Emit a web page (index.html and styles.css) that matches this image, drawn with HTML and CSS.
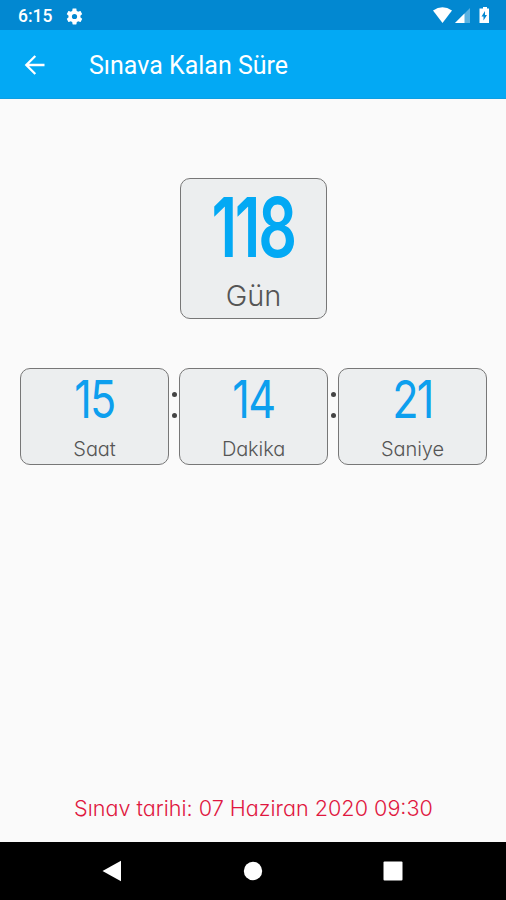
FILE: index.html
```html
<!DOCTYPE html>
<html lang="tr">

<head>
    <meta charset="UTF-8">
    <meta name="viewport" content="width=device-width, initial-scale=1.0">
    <title>Sınava Kalan Süre</title>
    <link rel="stylesheet" href="styles.css">
</head>

<body>
    <div class="status-bar">
        <span class="clock">6:15</span>
        <svg class="gear" width="19" height="19" viewBox="0 0 24 24">
            <path fill="#fff" d="M19.4 13c0-.3.1-.6.1-1s0-.7-.1-1l2.1-1.700c.2-.1.2-.4.1-.6l-2-3.500c-.1-.2-.4-.3-.6-.2l-2.500 1c-.5-.4-1.100-.7-1.700-1l-.4-2.600c0-.3-.2-.4-.4-.4h-4c-.2 0-.5.2-.5.4l-.4 2.600c-.6.3-1.200.6-1.700 1l-2.500-1c-.2-.1-.5 0-.6.2l-2 3.500c-.1.2-.1.500.1.600l2.100 1.700c0 .3-.1.6-.1 1s0 .7.1 1l-2.100 1.700c-.2.1-.2.4-.1.6l2 3.500c.1.2.4.300.6.200l2.500-1c.5.4 1.100.7 1.700 1l.4 2.600c0 .2.2.4.5.4h4c.2 0 .5-.2.5-.4l.4-2.600c.6-.3 1.200-.6 1.700-1l2.500 1c.2.1.5 0 .6-.2l2-3.500c.1-.2.1-.5-.1-.6zM12 15.300a3.300 3.300 0 1 1 0-6.600 3.300 3.300 0 0 1 0 6.600z"/>
        </svg>
        <svg class="signals" width="60" height="20" viewBox="0 0 60 20">
            <path fill="#fff" d="M1 4.500Q10.500-2 20 4.500L10.500 17z"/>
            <path fill="#fff" fill-opacity=".35" d="M38 2v15H23z"/>
            <path fill="#fff" d="M32.500 7.500V17H23z"/>
            <path fill="#fff" d="M49.500 2.500h1.500V1h4v1.500h2V17H47.500V2.500z"/>
            <path fill="#0288d1" d="M53 5l-3.500 5.500h2v4l3.500-5.500h-2z"/>
        </svg>
    </div>

    <div class="toolbar">
        <svg class="back" width="22" height="22" viewBox="0 0 22 22">
            <path fill="none" stroke="#fff" stroke-width="2.300" d="M20.500 11H2.500M11.300 2L2.300 11l9 9"/>
        </svg>
        <h1>Sınava Kalan Süre</h1>
    </div>

    <main>
        <div class="box days">
            <div class="number">118</div>
            <div class="label">Gün</div>
        </div>
        <div class="time">
            <div class="box">
                <div class="number hours">15</div>
                <div class="label">Saat</div>
            </div>
            <div class="dots"><i></i><i></i></div>
            <div class="box">
                <div class="number minutes">14</div>
                <div class="label">Dakika</div>
            </div>
            <div class="dots"><i></i><i></i></div>
            <div class="box">
                <div class="number seconds">21</div>
                <div class="label">Saniye</div>
            </div>
        </div>
        <p class="exam-date">Sınav tarihi: 07 Haziran 2020 09:30</p>
    </main>

    <div class="nav-bar">
        <svg width="20" height="22" viewBox="0 0 20 22"><path fill="#fff" d="M19 .8v20.400L.5 11z"/></svg>
        <svg width="20" height="20" viewBox="0 0 20 20"><circle fill="#fff" cx="10" cy="10" r="9.200"/></svg>
        <svg width="20" height="20" viewBox="0 0 20 20"><rect fill="#fff" x=".5" y=".5" width="19" height="19" rx="1"/></svg>
    </div>
</body>

</html>
```

FILE: styles.css
```css
* {
    box-sizing: border-box;
}

body {
    margin: 0;
    height: 900px;
    display: flex;
    flex-direction: column;
    overflow: hidden;
    background-color: #fafafa;
    font-family: Inter, "Noto Sans", sans-serif;
    font-feature-settings: "cv11";
}

.status-bar {
    height: 30px;
    display: flex;
    align-items: center;
    padding: 2px 14px 0 18px;
    background-color: #0288d1;
    color: #fff;
    font: 500 17.5px Roboto, sans-serif;
}

.clock {
    width: 47px;
}

.signals {
    margin-left: auto;
}

.toolbar {
    height: 69px;
    flex: none;
    display: flex;
    align-items: center;
    padding: 1px 0 0 24px;
    background-color: #03a9f4;
    border-bottom: 1px solid #0c9fe3;
}

.toolbar h1 {
    margin: 1px 0 0 43px;
    color: #fff;
    font: 400 25px Roboto, sans-serif;
}

main {
    flex: 1;
    display: flex;
    flex-direction: column;
    align-items: center;
    padding-left: 1px;
}

.box {
    width: 149px;
    height: 97px;
    display: flex;
    flex-direction: column;
    align-items: center;
    background-color: #eceeef;
    border: 1px solid #777;
    border-radius: 10px;
}

.number {
    margin-top: 2px;
    color: #0d9fee;
    font-size: 52px;
    font-weight: 400;
    line-height: 58px;
    letter-spacing: -2px;
    transform: scaleX(.83);
}

.label {
    margin-top: 7px;
    color: #555;
    font-size: 20px;
    font-weight: 300;
    line-height: 26px;
    letter-spacing: -.1px;
}

.days {
    width: 147px;
    height: 141px;
    margin-top: 79px;
}

.days .number {
    margin: 3px 0 0 0;
    color: #03a9f4;
    font-size: 83px;
    font-weight: 600;
    line-height: 90px;
    letter-spacing: -3px;
    transform: scaleX(.73);
}

.days .label {
    font-size: 29px;
    line-height: 36px;
    margin-top: 6px;
}

.time {
    width: 467px;
    margin-top: 49px;
    display: flex;
    justify-content: space-between;
}

.dots {
    display: flex;
    flex-direction: column;
    gap: 16px;
    padding-top: 24px;
}

.dots i {
    width: 5px;
    height: 5px;
    border-radius: 50%;
    background-color: #444;
}

.exam-date {
    margin: auto 0 20px;
    color: #e0173f;
    font-size: 21.6px;
    font-weight: 300;
    line-height: 28px;
    white-space: nowrap;
}

.nav-bar {
    height: 58px;
    flex: none;
    display: flex;
    align-items: center;
    justify-content: space-between;
    padding: 0 103px 0 102px;
    background-color: #000;
}
```
